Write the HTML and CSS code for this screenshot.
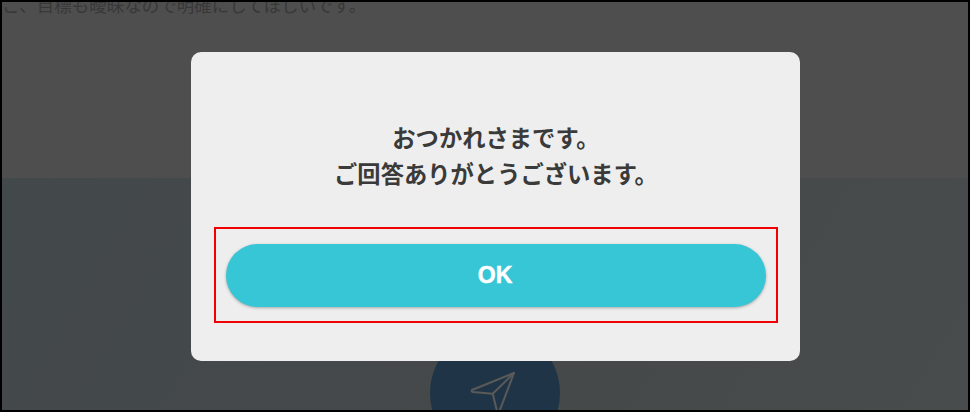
FILE: index.html
```html
<!DOCTYPE html>
<html lang="ja">
<head>
<meta charset="utf-8">
<title>おつかれさまです</title>
<link rel="stylesheet" href="styles.css">
</head>
<body>
<div class="frame">
  <section class="top"><p class="behind">こ、目標も曖昧なので明確にしてほしいです。</p></section>
  <section class="bottom">
    <div class="send">
      <svg class="plane" width="60" height="60" viewBox="0 0 60 60" fill="none" stroke="#5a5a58" stroke-width="2" stroke-linejoin="round" stroke-linecap="round">
        <path d="M54 8 L12 25 Q11 26.500 13 27 L32.700 28.800 L38 50 Z"/>
        <path d="M54 8 L32.700 28.800"/>
      </svg>
    </div>
  </section>
  <div class="modal">
    <p class="message">おつかれさまです。<br>ご回答ありがとうございます。</p>
    <div class="highlight"><button class="ok">OK</button></div>
  </div>
</div>
</body>
</html>
```

FILE: styles.css
```css
* { box-sizing: border-box; }
html, body { margin: 0; padding: 0; width: 970px; height: 412px; overflow: hidden; }
body { font-family: "Noto Sans CJK JP", "Liberation Sans", sans-serif; background: #000; }
.frame {
  position: relative;
  width: 970px; height: 412px;
  border: 2px solid #000;
  display: flex; flex-direction: column;
  overflow: hidden;
}
.top { height: 176px; background: #4e4e4e; overflow: hidden; flex: none; }
.behind {
  margin: -10px 0 0 0;
  font-size: 17.5px; line-height: 26px;
  color: #383838;
  white-space: nowrap;
}
.bottom {
  flex: 1;
  position: relative;
  background: linear-gradient(120deg, #43484a 0%, #45494a 60%, #484c4c 100%);
  display: flex; justify-content: center;
  overflow: hidden;
}
.send {
  width: 130px; height: 130px; border-radius: 50%;
  background: #1f3547;
  margin-top: 150px;
  margin-left: 20px;
  flex: none;
  position: relative;
}
.plane { position: absolute; left: 30px; top: 37px; }
.modal {
  position: absolute;
  left: 189px; top: 50px;
  width: 609px; height: 309px;
  background: #eeeeee;
  border-radius: 10px;
  padding: 67px 22px 0 23px;
  display: flex; flex-direction: column; align-items: stretch;
}
.message {
  margin: 0;
  text-align: center;
  font-size: 23.3px; line-height: 36px; font-weight: 700;
  color: #3a3a3a;
}
.highlight {
  margin-top: 36px;
  height: 96px;
  border: 2px solid #f00000;
  padding: 15px 10px 0 10px;
}
.ok {
  display: block; width: 100%;
  height: 63px;
  border: 0; border-radius: 32px;
  background: #36c6d5;
  box-shadow: 0 1px 3px rgba(0,0,0,.3);
  color: #fff;
  font-family: "Liberation Sans", sans-serif;
  font-size: 23px; font-weight: 700;
  padding: 0 2px 0 0;
  -webkit-text-stroke: 0.5px #fff;
}
```
